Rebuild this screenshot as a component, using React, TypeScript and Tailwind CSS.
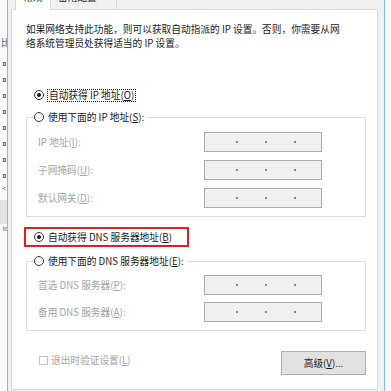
import React from "react";

const font = "font-['Noto_Sans_CJK_SC','Microsoft_YaHei',sans-serif]";

function Radio({ checked }: { checked?: boolean }) {
  return (
    <span className="w-[10px] h-[10px] rounded-full border border-[#333] bg-white flex items-center justify-center shrink-0">
      {checked && <span className="w-[4px] h-[4px] rounded-full bg-[#1a1a1a]" />}
    </span>
  );
}

function IpBox() {
  return (
    <div className="w-[118px] h-[20px] border border-[#ababab] bg-[#f0f0f0] flex items-center pl-[31px] gap-[27px]">
      <span className="w-[2px] h-[2px] bg-[#8a8a8a]" />
      <span className="w-[2px] h-[2px] bg-[#8a8a8a]" />
      <span className="w-[2px] h-[2px] bg-[#8a8a8a]" />
    </div>
  );
}

function Field({ label, k }: { label: string; k: string }) {
  return (
    <div className="flex items-center h-[20px]">
      <span className="w-[177px] pl-[11px] text-[#a3a3a3] whitespace-nowrap">
        {label}(<u>{k}</u>):
      </span>
      <IpBox />
    </div>
  );
}

export default function App() {
  return (
    <div
      className={`${font} w-[391px] h-[391px] overflow-hidden bg-[#f0f0f0] flex text-[9.7px] leading-[14px] text-[#1a1a1a]`}
    >
      {/* window behind, left edge */}
      <div className="w-[7px] h-full bg-[#fafafa] flex flex-col items-end text-[#555] overflow-hidden">
        <span className="mt-[36px] mr-[-3px] text-[9px]">比</span>
        <div className="flex flex-col gap-[12px] mt-[12px] mr-px">
          {Array.from({ length: 8 }).map((_, i) => (
            <span key={i} className="w-[3px] h-[4px] border border-[#667]" />
          ))}
        </div>
        <span className="mt-[6px] mr-px text-[7px] leading-[8px]">&lt;</span>
        <div className="w-full h-[24px] mt-[8px] bg-[#e4e4e4]" />
        <span className="mt-[1px] text-[6px] leading-[8px] mr-[-1px]">lo</span>
      </div>
      <div className="w-px h-full bg-[#8fb5df]" />

      {/* dialog */}
      <div className="flex-1 flex flex-col pl-[3px] pr-[6px]">
        <div className="h-[9px] flex relative z-10">
          <div className="w-[4px]" />
          <div className="w-[36px] h-[10px] bg-white border-x border-[#d9d9d9] overflow-hidden flex justify-center">
            <span className="-mt-[10px]">常规</span>
          </div>
          <div className="w-[66px] h-[9px] bg-[#f0f0f0] border-r border-[#d9d9d9] overflow-hidden pl-[7px]">
            <span className="block -mt-[10px]">备用配置</span>
          </div>
        </div>

        <div className="h-[381px] bg-white border border-[#d9d9d9] flex flex-col pl-[14px]">
          <p className="pt-[12px] whitespace-nowrap">
            如果网络支持此功能，则可以获取自动指派的 IP 设置。否则，你需要从网
            <br />
            络系统管理员处获得适当的 IP 设置。
          </p>

          <div className="mt-[38px] ml-[8px] h-[14px] flex items-center gap-[3px]">
            <Radio checked />
            <span className="border border-dotted border-[#222] px-px leading-[11px] whitespace-nowrap">
              自动获得 IP 地址(<u>O</u>)
            </span>
          </div>

          <div className="mt-[8px] ml-[7px] h-[14px] w-fit pl-px pr-[3px] bg-white relative z-10 flex items-center gap-[4px]">
            <Radio />
            <span className="whitespace-nowrap">
              使用下面的 IP 地址(<u>S</u>):
            </span>
          </div>
          <div className="-mt-[7px] w-[340px] border border-[#dcdcdc] pt-[14px] pb-[8px] flex flex-col gap-[8px]">
            <Field label="IP 地址" k="I" />
            <Field label="子网掩码" k="U" />
            <Field label="默认网关" k="D" />
          </div>

          <div className="mt-[10px] -ml-[2px] w-[165px] h-[20px] border-2 border-[#e0201f] pl-[8px] flex items-center gap-[4px]">
            <Radio checked />
            <span className="whitespace-nowrap">
              自动获得 DNS 服务器地址(<u>B</u>)
            </span>
          </div>

          <div className="mt-[7px] ml-[7px] h-[14px] w-fit pl-px pr-[3px] bg-white relative z-10 flex items-center gap-[4px]">
            <Radio />
            <span className="whitespace-nowrap">
              使用下面的 DNS 服务器地址(<u>E</u>):
            </span>
          </div>
          <div className="-mt-[7px] w-[340px] border border-[#dcdcdc] pt-[13px] pb-[8px] flex flex-col gap-[7px]">
            <Field label="首选 DNS 服务器" k="P" />
            <Field label="备用 DNS 服务器" k="A" />
          </div>

          <div className="mt-[20px] w-[340px] flex items-start justify-between">
            <div className="ml-[13px] mt-[2px] flex items-center gap-[3px] text-[#a3a3a3]">
              <span className="w-[9px] h-[9px] border border-[#c4c4c4] bg-white" />
              <span className="whitespace-nowrap">
                退出时验证设置(<u>L</u>)
              </span>
            </div>
            <button className="w-[85px] h-[24px] bg-[#e1e1e1] border border-[#adadad] flex items-center justify-center">
              高级(<u>V</u>)...
            </button>
          </div>
        </div>
      </div>

      <div className="w-px h-full bg-[#8fb5df]" />
      <div className="w-[6px] h-full bg-[#f7f7f7]" />
    </div>
  );
}
